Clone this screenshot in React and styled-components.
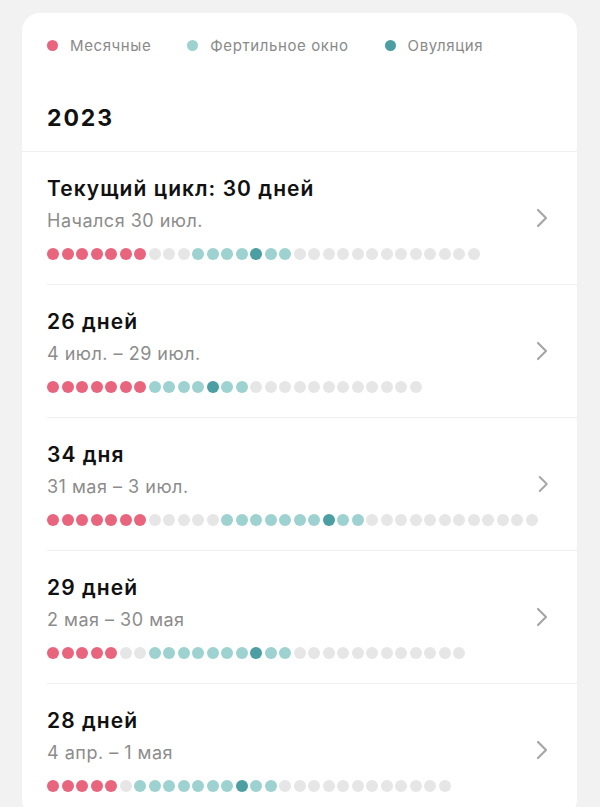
import React from "react";
import styled, { createGlobalStyle } from "styled-components";

const GlobalStyle = createGlobalStyle`
  body {
    margin: 0;
    background: #f2f2f2;
    font-family: Inter, "Noto Sans", sans-serif;
  }
`;

const COLORS = {
  period: "#e9657d",
  fertile: "#9dd2d0",
  ovulation: "#4b9ea1",
  empty: "#e6e6e6",
};

const Page = styled.div`
  padding: 13px 23px 0 22px;
  height: 807px;
  box-sizing: border-box;
  overflow: hidden;
`;

const Card = styled.div`
  background: #fff;
  border-radius: 18px;
  overflow: hidden;
`;

const Header = styled.div`
  padding: 22px 25px 19px;
  border-bottom: 1px solid #f0f0f0;
`;

const Legend = styled.div`
  display: flex;
  align-items: center;
  gap: 36px;
  height: 20px;
`;

const LegendItem = styled.div`
  display: flex;
  align-items: center;
  gap: 12px;
  font-size: 15px;
  letter-spacing: 0.6px;
  color: #8a8a8a;
`;

const LegendDot = styled.span`
  width: 11px;
  height: 11px;
  border-radius: 50%;
  background: ${(p) => p.color};
`;

const Year = styled.h2`
  margin: 49px 0 0;
  font-size: 23px;
  line-height: 28px;
  font-weight: 700;
  letter-spacing: 1.9px;
  color: #111;
`;

const Row = styled.div`
  display: flex;
  align-items: center;
  margin-left: 25px;
  padding: 24px 29px 24px 0;
  border-bottom: 1px solid #efefef;
`;

const RowBody = styled.div`
  flex: 1;
`;

const Title = styled.div`
  font-size: 21px;
  line-height: 26px;
  font-weight: 600;
  letter-spacing: 1.05px;
  color: #111;
`;

const Subtitle = styled.div`
  margin-top: 8px;
  font-size: 18px;
  line-height: 22px;
  letter-spacing: 0.5px;
  color: #8c8c8c;
`;

const Dots = styled.div`
  display: flex;
  gap: 2.5px;
  margin-top: 16px;
`;

const Dot = styled.span`
  width: 12px;
  height: 12px;
  border-radius: 50%;
  background: ${(p) => COLORS[p.kind]};
`;

const Chevron = () => (
  <svg width="12" height="20" viewBox="0 0 12 20" fill="none">
    <path
      d="M2 2 L10 10 L2 18"
      stroke="#a6a6a6"
      strokeWidth="2.2"
      strokeLinecap="round"
      strokeLinejoin="round"
    />
  </svg>
);

// period days, empty gap, fertile before ovulation, fertile after, empty tail
const build = (period, gap, fertile, after, empty) => [
  ...Array(period).fill("period"),
  ...Array(gap).fill("empty"),
  ...Array(fertile).fill("fertile"),
  "ovulation",
  ...Array(after).fill("fertile"),
  ...Array(empty).fill("empty"),
];

const cycles = [
  { title: "Текущий цикл: 30 дней", sub: "Начался 30 июл.", dots: build(7, 3, 4, 2, 13) },
  { title: "26 дней", sub: "4 июл. – 29 июл.", dots: build(7, 0, 4, 2, 12) },
  { title: "34 дня", sub: "31 мая – 3 июл.", dots: build(7, 5, 7, 2, 12) },
  { title: "29 дней", sub: "2 мая – 30 мая", dots: build(5, 2, 7, 2, 12) },
  { title: "28 дней", sub: "4 апр. – 1 мая", dots: build(5, 1, 7, 2, 12) },
];

const App = () => {
  return (
    <Page>
      <GlobalStyle />
      <Card>
        <Header>
          <Legend>
            <LegendItem>
              <LegendDot color={COLORS.period} />
              Месячные
            </LegendItem>
            <LegendItem>
              <LegendDot color={COLORS.fertile} />
              Фертильное окно
            </LegendItem>
            <LegendItem>
              <LegendDot color={COLORS.ovulation} />
              Овуляция
            </LegendItem>
          </Legend>
          <Year>2023</Year>
        </Header>
        {cycles.map((c) => (
          <Row key={c.title}>
            <RowBody>
              <Title>{c.title}</Title>
              <Subtitle>{c.sub}</Subtitle>
              <Dots>
                {c.dots.map((k, i) => (
                  <Dot key={i} kind={k} />
                ))}
              </Dots>
            </RowBody>
            <Chevron />
          </Row>
        ))}
      </Card>
    </Page>
  );
};

export default App;
